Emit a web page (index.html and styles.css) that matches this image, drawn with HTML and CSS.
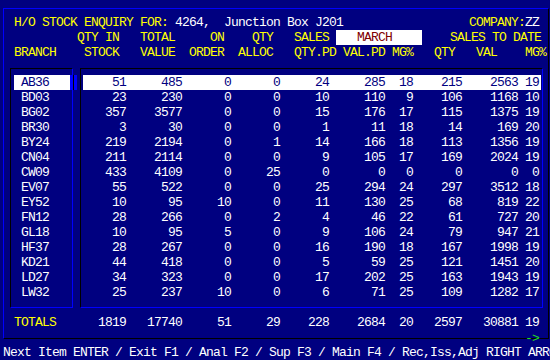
FILE: index.html
```html
<!DOCTYPE html>
<html lang="en">

<head>
  <meta charset="UTF-8" />
  <title>H/O Stock Enquiry</title>
  <link rel="stylesheet" href="styles.css">
</head>

<body>
  <div class="screen">
    <div class="frame">
      <div class="line title">
        <span><span class="yel">H/O STOCK ENQUIRY FOR:</span> 4264,  Junction Box J201</span>
        <span><span class="yel">COMPANY:</span>ZZ</span>
      </div>
      <div class="line yel">         QTY IN   TOTAL     ON    QTY   SALES <span class="month">   MARCH</span>    SALES TO DATE</div>
      <div class="line yel">BRANCH    STOCK   VALUE  ORDER  ALLOC   QTY.PD VAL.PD MG%   QTY   VAL    MG%</div>

      <div class="tables">
        <div class="branch-box">
          <div class="brow sel">AB36</div>
          <div class="brow">BD03</div>
          <div class="brow">BG02</div>
          <div class="brow">BR30</div>
          <div class="brow">BY24</div>
          <div class="brow">CN04</div>
          <div class="brow">CW09</div>
          <div class="brow">EV07</div>
          <div class="brow">EY52</div>
          <div class="brow">FN12</div>
          <div class="brow">GL18</div>
          <div class="brow">HF37</div>
          <div class="brow">KD21</div>
          <div class="brow">LD27</div>
          <div class="brow">LW32</div>
        </div>

        <div class="data-box">
          <div class="drow sel"><span>51</span><span>485</span><span>0</span><span>0</span><span>24</span><span>285</span><span>18</span><span>215</span><span>2563</span><span>19</span></div>
          <div class="drow"><span>23</span><span>230</span><span>0</span><span>0</span><span>10</span><span>110</span><span>9</span><span>106</span><span>1168</span><span>10</span></div>
          <div class="drow"><span>357</span><span>3577</span><span>0</span><span>0</span><span>15</span><span>176</span><span>17</span><span>115</span><span>1375</span><span>19</span></div>
          <div class="drow"><span>3</span><span>30</span><span>0</span><span>0</span><span>1</span><span>11</span><span>18</span><span>14</span><span>169</span><span>20</span></div>
          <div class="drow"><span>219</span><span>2194</span><span>0</span><span>1</span><span>14</span><span>166</span><span>18</span><span>113</span><span>1356</span><span>19</span></div>
          <div class="drow"><span>211</span><span>2114</span><span>0</span><span>0</span><span>9</span><span>105</span><span>17</span><span>169</span><span>2024</span><span>19</span></div>
          <div class="drow"><span>433</span><span>4109</span><span>0</span><span>25</span><span>0</span><span>0</span><span>0</span><span>0</span><span>0</span><span>0</span></div>
          <div class="drow"><span>55</span><span>522</span><span>0</span><span>0</span><span>25</span><span>294</span><span>24</span><span>297</span><span>3512</span><span>18</span></div>
          <div class="drow"><span>10</span><span>95</span><span>10</span><span>0</span><span>11</span><span>130</span><span>25</span><span>68</span><span>819</span><span>22</span></div>
          <div class="drow"><span>28</span><span>266</span><span>0</span><span>2</span><span>4</span><span>46</span><span>22</span><span>61</span><span>727</span><span>20</span></div>
          <div class="drow"><span>10</span><span>95</span><span>5</span><span>0</span><span>9</span><span>106</span><span>24</span><span>79</span><span>947</span><span>21</span></div>
          <div class="drow"><span>28</span><span>267</span><span>0</span><span>0</span><span>16</span><span>190</span><span>18</span><span>167</span><span>1998</span><span>19</span></div>
          <div class="drow"><span>44</span><span>418</span><span>0</span><span>0</span><span>5</span><span>59</span><span>25</span><span>121</span><span>1451</span><span>20</span></div>
          <div class="drow"><span>34</span><span>323</span><span>0</span><span>0</span><span>17</span><span>202</span><span>25</span><span>163</span><span>1943</span><span>19</span></div>
          <div class="drow"><span>25</span><span>237</span><span>10</span><span>0</span><span>6</span><span>71</span><span>25</span><span>109</span><span>1282</span><span>17</span></div>
        </div>
      </div>

      <div class="totals">
        <span class="label yel">TOTALS</span><span>1819</span><span>17740</span><span>51</span><span>29</span><span>228</span><span>2684</span><span>20</span><span>2597</span><span>30881</span><span>19</span>
      </div>
    </div>

    <span class="more">-&gt;</span>

    <div class="footer">Next Item ENTER / Exit F1 / Anal F2 / Sup F3 / Main F4 / Rec,Iss,Adj RIGHT ARROW</div>
  </div>
</body>

</html>
```

FILE: styles.css
```css
* {
  box-sizing: border-box;
  margin: 0;
  padding: 0;
}

body {
  background: #000080;
  color: #ffffff;
  font-family: 'Liberation Mono', 'DejaVu Sans Mono', monospace;
  font-size: 13px;
  letter-spacing: -0.8px;
  line-height: 15px;
  width: 550px;
  height: 360px;
  overflow: hidden;
}

.screen {
  position: relative;
  padding: 8px 0 0 3px;
}

/* raised outer frame: light top/left, dark bottom/right */
.frame {
  width: 546px;
  border-top: 1px solid #0000ff;
  border-left: 1px solid #0000ff;
  border-right: 1px solid #000000;
  border-bottom: 1px solid #000000;
  padding: 6px 0 8px 0;
}

.yel {
  color: #ffff00;
}

.line {
  height: 15px;
  padding-left: 10px;
  white-space: pre;
}

.title {
  display: flex;
  justify-content: space-between;
  padding-right: 9px;
}

.month {
  display: inline-block;
  width: 86px;
  background: #ffffff;
  color: #800000;
}

.tables {
  display: flex;
  gap: 7px;
  margin: 8px 0 0 6px;
}

/* sunken boxes: dark top/left, light bottom/right */
.branch-box,
.data-box {
  border-top: 1px solid #000000;
  border-left: 1px solid #000000;
  border-right: 1px solid #0000ff;
  border-bottom: 1px solid #0000ff;
}

.branch-box {
  width: 63px;
  padding: 6px 2px 7px 3px;
}

.data-box {
  width: 463px;
  padding: 6px 1px 7px 2px;
}

.brow {
  position: relative;
  height: 15px;
  padding-left: 7px;
}

.drow,
.totals {
  display: grid;
  grid-template-columns: 43px 56px 49px 49px 49px 56px 28px 49px 56px 21px;
  text-align: right;
  white-space: pre;
}

.drow {
  height: 15px;
  padding-right: 2px;
}

.sel {
  background: #ffffff;
  color: #000080;
}

.brow.sel::after {
  content: '';
  position: absolute;
  left: 100%;
  top: 0;
  width: 7px;
  height: 15px;
  background: linear-gradient(to right, #0000ff 3px, #000000 3px 4px, #0000ff 4px);
}

.totals {
  grid-template-columns: 79px 43px 56px 49px 49px 49px 56px 28px 49px 56px 21px;
  height: 15px;
  margin-top: 7px;
}

.totals .label {
  text-align: left;
  padding-left: 10px;
}

.more {
  position: absolute;
  left: 525px;
  top: 331px;
  color: #22dd22;
}

.footer {
  height: 15px;
  margin-top: 6px;
  white-space: pre;
  overflow: hidden;
}
```
